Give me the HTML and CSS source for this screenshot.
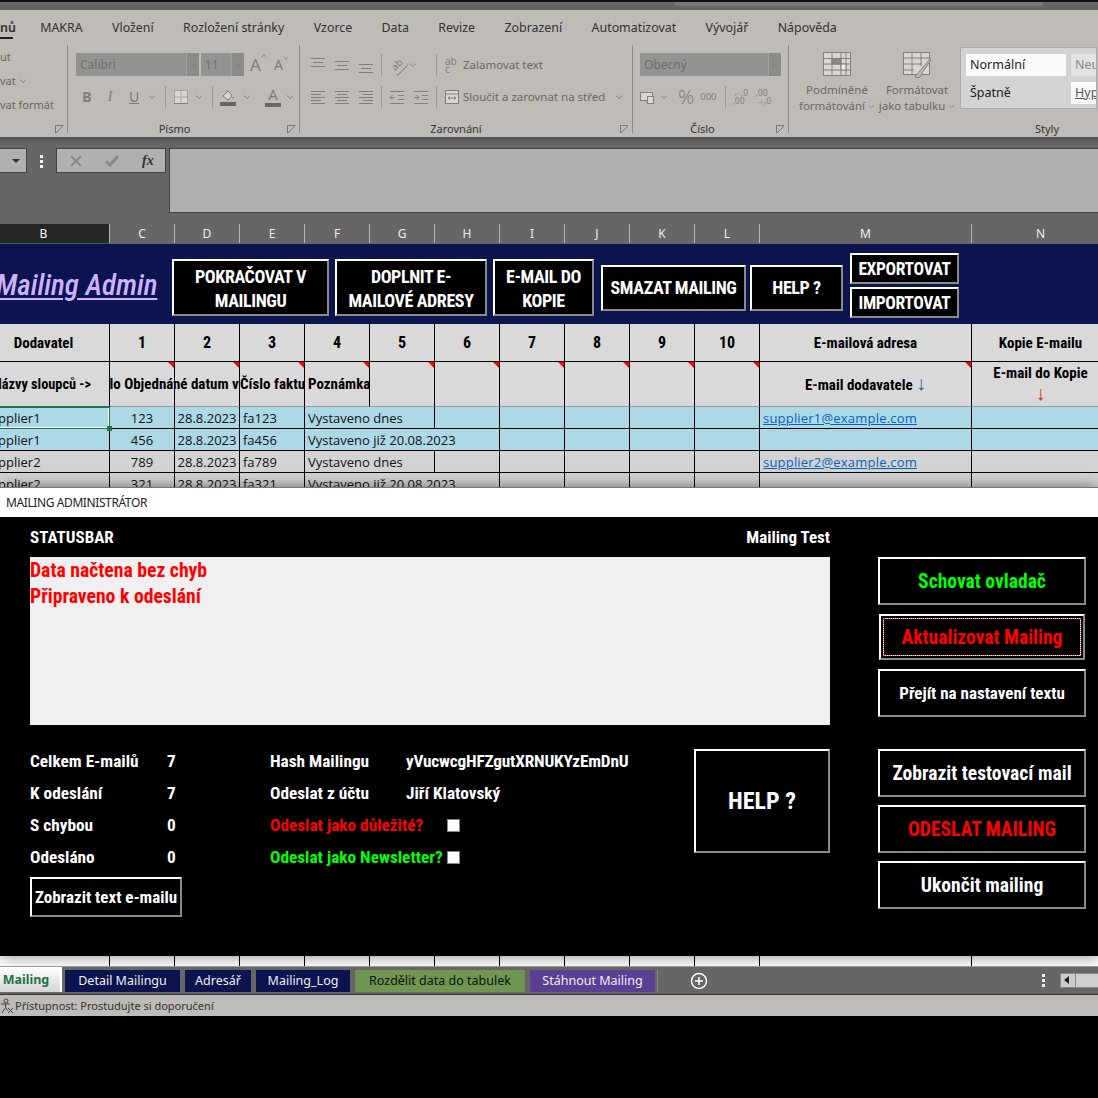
FILE: index.html
```html
<!DOCTYPE html>
<html lang="cs">

<head>
    <meta charset="UTF-8">
    <meta name="viewport" content="width=device-width, initial-scale=1.0">
    <title>Mailing Admin</title>
    <link rel="stylesheet" href="styles.css">
</head>

<body>
    <svg class="sprite" width="0" height="0">
        <symbol id="chev" viewBox="0 0 8 8"><path d="M1 2.5 4 5.5 7 2.5"/></symbol>
        <symbol id="al-top" viewBox="0 0 16 16"><path d="M1 2.5H15M3 6.5H13M1 10.5H15" transform="translate(0 -1)"/></symbol>
        <symbol id="al-mid" viewBox="0 0 16 16"><path d="M1 4.5H15M3 8.5H13M1 12.5H15"/></symbol>
        <symbol id="al-bot" viewBox="0 0 16 16"><path d="M1 7.5H15M3 11.5H13M1 15.5H15"/></symbol>
        <symbol id="al-left" viewBox="0 0 16 16"><path d="M1 2.5H15M1 5.5H11M1 8.5H15M1 11.5H11M1 14.5H15"/></symbol>
        <symbol id="al-center" viewBox="0 0 16 16"><path d="M1 2.5H15M3 5.5H13M1 8.5H15M3 11.5H13M1 14.5H15"/></symbol>
        <symbol id="al-right" viewBox="0 0 16 16"><path d="M1 2.5H15M5 5.5H15M1 8.5H15M5 11.5H15M1 14.5H15"/></symbol>
        <symbol id="ind-less" viewBox="0 0 16 16"><path d="M1 2.5H15M9 6.5H15M9 10.5H15M1 14.5H15M6 8.5H1M3.5 6 1 8.5 3.5 11"/></symbol>
        <symbol id="ind-more" viewBox="0 0 16 16"><path d="M1 2.5H15M9 6.5H15M9 10.5H15M1 14.5H15M1 8.5H6M3.5 6 6 8.5 3.5 11"/></symbol>
    </svg>

    <div class="top-strip"><div class="top-search"></div></div>

    <div class="ribbon">
        <div class="rib-tabs">
            <span class="rib-tab rib-tab-active">nů</span>
            <span class="rib-tab">MAKRA</span>
            <span class="rib-tab">Vložení</span>
            <span class="rib-tab">Rozložení stránky</span>
            <span class="rib-tab">Vzorce</span>
            <span class="rib-tab">Data</span>
            <span class="rib-tab">Revize</span>
            <span class="rib-tab">Zobrazení</span>
            <span class="rib-tab">Automatizovat</span>
            <span class="rib-tab">Vývojář</span>
            <span class="rib-tab">Nápověda</span>
        </div>
        <div class="rib-groups">
            <div class="rib-group group-clip">
                <div class="clip-line">ut</div>
                <div class="clip-line">vat <svg class="ico" width="8" height="8"><use href="#chev"/></svg></div>
                <div class="clip-line">vat formát</div>
                <div class="launcher"></div>
            </div>

            <div class="rib-group group-font">
                <div class="rib-row">
                    <div class="select select-font"><span>Calibri</span><i class="sel-arrow"><svg class="ico" width="8" height="8"><use href="#chev"/></svg></i></div>
                    <div class="select select-size"><span>11</span><i class="sel-arrow"><svg class="ico" width="8" height="8"><use href="#chev"/></svg></i></div>
                    <span class="grow-a">A<svg class="ico" width="6" height="6" viewBox="0 0 8 8"><path d="M1 6 4 2 7 6"/></svg></span>
                    <span class="grow-a grow-small">A<svg class="ico" width="6" height="6" viewBox="0 0 8 8"><path d="M1 2 4 6 7 2"/></svg></span>
                </div>
                <div class="rib-row row-font-fmt">
                    <b class="fmt fmt-b">B</b>
                    <i class="fmt fmt-i">I</i>
                    <u class="fmt fmt-u">U</u>
                    <svg class="ico" width="8" height="8"><use href="#chev"/></svg>
                    <span class="sep"></span>
                    <svg class="ico ico-border" width="16" height="16" viewBox="0 0 16 16"><rect x="1.5" y="1.5" width="13" height="13" fill="#d9d6d3" stroke-dasharray="1 1"/><path d="M8 1.5V14.5M1.5 8H14.5" stroke-dasharray="1 1"/><path d="M1 14.5H15"/></svg>
                    <svg class="ico" width="8" height="8"><use href="#chev"/></svg>
                    <span class="sep"></span>
                    <svg class="ico ico-fill" width="16" height="18" viewBox="0 0 16 18"><path d="M3 8 8 3 12 8 8 12Z" fill="#d9d6d3"/><path d="M6 2 8 4M13 9V11"/><rect x="0" y="14" width="16" height="4" fill="#6a6766" stroke="none"/></svg>
                    <svg class="ico" width="8" height="8"><use href="#chev"/></svg>
                    <span class="font-color">A</span>
                    <svg class="ico" width="8" height="8"><use href="#chev"/></svg>
                </div>
                <div class="rib-label label-font">Písmo</div>
                <div class="launcher"></div>
            </div>

            <div class="rib-group group-align">
                <div class="rib-row">
                    <svg class="ico" width="16" height="16"><use href="#al-top"/></svg>
                    <svg class="ico ml8" width="16" height="16"><use href="#al-mid"/></svg>
                    <svg class="ico ml8" width="16" height="16"><use href="#al-bot"/></svg>
                    <span class="sep sep-a"></span>
                    <span class="orient-ico">ab</span>
                    <svg class="ico ml4" width="8" height="8"><use href="#chev"/></svg>
                    <span class="sep sep-b"></span>
                    <span class="wrap-ico">ab<br>c</span>
                    <span class="rib-text">Zalamovat text</span>
                </div>
                <div class="rib-row">
                    <svg class="ico" width="16" height="16"><use href="#al-left"/></svg>
                    <svg class="ico ml8" width="16" height="16"><use href="#al-center"/></svg>
                    <svg class="ico ml8" width="16" height="16"><use href="#al-right"/></svg>
                    <span class="sep sep-a"></span>
                    <svg class="ico" width="16" height="16"><use href="#ind-less"/></svg>
                    <svg class="ico ml8" width="16" height="16"><use href="#ind-more"/></svg>
                    <span class="sep sep-c"></span>
                    <svg class="ico" width="14" height="16" viewBox="0 0 14 16"><rect x="0.5" y="1.5" width="13" height="13" fill="#d9d6d3"/><path d="M0.5 5H13.5M3 9H11M3 9 5 7.5M3 9 5 10.5M11 9 9 7.5M11 9 9 10.5"/></svg>
                    <span class="rib-text">Sloučit a zarovnat na střed</span>
                    <svg class="ico ml10" width="8" height="8"><use href="#chev"/></svg>
                </div>
                <div class="rib-label label-align">Zarovnání</div>
                <div class="launcher"></div>
            </div>

            <div class="rib-group group-num">
                <div class="rib-row">
                    <div class="select select-num"><span>Obecný</span><i class="sel-arrow"><svg class="ico" width="8" height="8"><use href="#chev"/></svg></i></div>
                </div>
                <div class="rib-row row-num">
                    <svg class="ico" width="15" height="16" viewBox="0 0 15 16"><rect x="0.5" y="3.5" width="12" height="8" fill="#d9d6d3"/><rect x="7.5" y="7.5" width="6" height="7" fill="#d9d6d3"/></svg>
                    <svg class="ico ml5" width="8" height="8"><use href="#chev"/></svg>
                    <span class="percent">%</span>
                    <span class="thousand">000</span>
                    <span class="sep sep-d"></span>
                    <span class="dec-btn">←,0<br>,00</span>
                    <span class="dec-btn">,00<br>→,0</span>
                </div>
                <div class="rib-label label-num">Číslo</div>
                <div class="launcher"></div>
            </div>

            <div class="rib-group group-styles">
                <div class="styles-row">
                    <div class="big-btn">
                        <svg class="ico" width="28" height="24" viewBox="0 0 28 24"><rect x="0.5" y="0.5" width="27" height="23" fill="#d9d6d3"/><path d="M0.5 6.5H27.5M0.5 12H27.5M0.5 18H27.5M9 0.5V23.5M18 0.5V23.5M23 0.5V23.5"/><rect x="9" y="6.5" width="9" height="5.5" fill="#8c8a88"/><rect x="18" y="12" width="5" height="6" fill="#eee"/></svg>
                        <span>Podmíněné<br>formátování <svg class="ico" width="7" height="7"><use href="#chev"/></svg></span>
                    </div>
                    <div class="big-btn">
                        <svg class="ico" width="30" height="28" viewBox="0 0 30 28"><rect x="1.5" y="0.5" width="26" height="22" fill="#d9d6d3"/><path d="M1.5 6H27.5M1.5 12H20M1.5 18H12M10 0.5V22M19 0.5V14"/><path d="M28 7 17 20 13 25C17 27 20 24 20 21L29 8Z" fill="#bdbab7"/></svg>
                        <span>Formátovat<br>jako tabulku <svg class="ico" width="7" height="7"><use href="#chev"/></svg></span>
                    </div>
                    <div class="gallery">
                        <div class="style-cell style-normal">Normální</div>
                        <div class="style-cell style-neutral">Neutrální</div>
                        <div class="style-cell style-bad">Špatně</div>
                        <div class="style-cell style-link">Hypertextový odkaz</div>
                    </div>
                </div>
                <div class="rib-label">Styly</div>
            </div>
        </div>
    </div>

    <div class="formula-bar">
        <div class="name-box"><span class="name-caret"></span></div>
        <div class="fb-dots"><i></i><i></i><i></i></div>
        <div class="fx-box">
            <svg class="fx-cross" width="12" height="12" viewBox="0 0 12 12"><path d="M1 1 11 11M11 1 1 11"/></svg>
            <svg class="fx-check" width="14" height="12" viewBox="0 0 14 12"><path d="M1 6 5 10 13 1"/></svg>
            <span class="fx-label">fx</span>
        </div>
        <div class="formula-input"></div>
    </div>

    <div class="col-heads">
        <span class="col-head col-selected">B</span>
        <span class="col-head">C</span>
        <span class="col-head">D</span>
        <span class="col-head">E</span>
        <span class="col-head">F</span>
        <span class="col-head">G</span>
        <span class="col-head">H</span>
        <span class="col-head">I</span>
        <span class="col-head">J</span>
        <span class="col-head">K</span>
        <span class="col-head">L</span>
        <span class="col-head">M</span>
        <span class="col-head">N</span>
    </div>

    <div class="sheet">
        <div class="banner">
            <span class="banner-title">Mailing Admin</span>
            <a class="btn banner-btn btn-two btn-continue">POKRAČOVAT V<br>MAILINGU</a>
            <a class="btn banner-btn btn-two btn-fill">DOPLNIT E-<br>MAILOVÉ ADRESY</a>
            <a class="btn banner-btn btn-two btn-copy">E-MAIL DO<br>KOPIE</a>
            <a class="btn banner-btn btn-low btn-delete">SMAZAT MAILING</a>
            <a class="btn banner-btn btn-low btn-help">HELP ?</a>
            <div class="banner-stack">
                <a class="btn banner-btn">EXPORTOVAT</a>
                <a class="btn banner-btn">IMPORTOVAT</a>
            </div>
        </div>

        <table class="grid">
            <colgroup>
                <col class="c-name">
                <col class="c-num"><col class="c-num"><col class="c-num"><col class="c-num"><col class="c-num">
                <col class="c-num"><col class="c-num"><col class="c-num"><col class="c-num"><col class="c-num">
                <col class="c-mail">
                <col class="c-copy">
            </colgroup>
            <tr class="row-head">
                <th>Dodavatel</th>
                <th>1</th><th>2</th><th>3</th><th>4</th><th>5</th>
                <th>6</th><th>7</th><th>8</th><th>9</th><th>10</th>
                <th>E-mailová adresa</th>
                <th>Kopie E-mailu</th>
            </tr>
            <tr class="row-names">
                <th class="names-first">Názvy sloupců -&gt;</th>
                <th class="note"><div class="clip clip-center">Číslo Objednávky</div></th>
                <th class="note"><div class="clip clip-center">Plánované datum vystavení</div></th>
                <th class="note"><div class="clip clip-tight">Číslo faktury</div></th>
                <th class="note"><div class="clip">Poznámka</div></th>
                <th class="note"></th><th class="note"></th><th class="note"></th><th class="note"></th><th class="note"></th><th class="note"></th>
                <th class="note">E-mail dodavatele <span class="arrow">↓</span></th>
                <th class="two-line">E-mail do Kopie<br><span class="arrow">↓</span></th>
            </tr>
            <tr class="row-data row-blue">
                <td class="t-left t-name selected">Supplier1</td><td>123</td><td>28.8.2023</td><td class="t-left">fa123</td>
                <td class="t-left" colspan="2">Vystaveno dnes</td>
                <td></td><td></td><td></td><td></td><td></td>
                <td class="t-left"><a class="mail">supplier1@example.com</a></td><td></td>
            </tr>
            <tr class="row-data row-blue">
                <td class="t-left t-name">Supplier1</td><td>456</td><td>28.8.2023</td><td class="t-left">fa456</td>
                <td class="t-left" colspan="3">Vystaveno již 20.08.2023</td>
                <td></td><td></td><td></td><td></td>
                <td></td><td></td>
            </tr>
            <tr class="row-data">
                <td class="t-left t-name">Supplier2</td><td>789</td><td>28.8.2023</td><td class="t-left">fa789</td>
                <td class="t-left" colspan="2">Vystaveno dnes</td>
                <td></td><td></td><td></td><td></td><td></td>
                <td class="t-left"><a class="mail">supplier2@example.com</a></td><td></td>
            </tr>
            <tr class="row-data">
                <td class="t-left t-name">Supplier2</td><td>321</td><td>28.8.2023</td><td class="t-left">fa321</td>
                <td class="t-left" colspan="3">Vystaveno již 20.08.2023</td>
                <td></td><td></td><td></td><td></td>
                <td></td><td></td>
            </tr>
            <tr class="row-rest">
                <td></td><td></td><td></td><td></td><td></td><td></td><td></td>
                <td></td><td></td><td></td><td></td><td></td><td></td>
            </tr>
        </table>

        <div class="dialog">
            <div class="dialog-title">MAILING ADMINISTRÁTOR</div>
            <div class="dialog-body">
                <div class="form-main">
                    <div class="status-head">
                        <span>STATUSBAR</span>
                        <span>Mailing Test</span>
                    </div>
                    <div class="status-box">
                        <p>Data načtena bez chyb</p>
                        <p>Připraveno k odeslání</p>
                    </div>
                    <div class="form-bottom">
                        <div class="stats">
                            <div class="stat"><span>Celkem E-mailů</span><b>7</b></div>
                            <div class="stat"><span>K odeslání</span><b>7</b></div>
                            <div class="stat"><span>S chybou</span><b>0</b></div>
                            <div class="stat"><span>Odesláno</span><b>0</b></div>
                            <a class="btn btn-text">Zobrazit text e-mailu</a>
                        </div>
                        <div class="info">
                            <div class="stat"><span>Hash Mailingu</span><b class="hash">yVucwcgHFZgutXRNUKYzEmDnU</b></div>
                            <div class="stat"><span>Odeslat z účtu</span><b>Jiří Klatovský</b></div>
                            <div class="stat check-row red"><span>Odeslat jako důležité?</span><i class="check"></i></div>
                            <div class="stat check-row green"><span>Odeslat jako Newsletter?</span><i class="check"></i></div>
                        </div>
                        <a class="btn btn-bighelp">HELP ?</a>
                    </div>
                </div>
                <div class="side">
                    <a class="btn side-btn green">Schovat ovladač</a>
                    <a class="btn side-btn red btn-focus">Aktualizovat Mailing</a>
                    <a class="btn side-btn side-small">Přejít na nastavení textu</a>
                    <a class="btn side-btn side-second">Zobrazit testovací mail</a>
                    <a class="btn side-btn red">ODESLAT MAILING</a>
                    <a class="btn side-btn">Ukončit mailing</a>
                </div>
            </div>
        </div>
    </div>

    <div class="sheet-tabs">
        <span class="tab tab-active">Mailing</span>
        <span class="tab tab-navy tab-detail">Detail Mailingu</span>
        <span class="tab tab-navy tab-book">Adresář</span>
        <span class="tab tab-navy tab-log">Mailing_Log</span>
        <span class="tab tab-olive">Rozdělit data do tabulek</span>
        <span class="tab tab-violet">Stáhnout Mailing</span>
        <span class="tabs-sep"></span>
        <svg class="tab-add" width="18" height="18" viewBox="0 0 18 18"><circle cx="9" cy="9" r="7.5"/><path d="M5 9H13M9 5V13"/></svg>
        <div class="fb-dots tab-dots"><i></i><i></i><i></i></div>
        <div class="hscroll"><span class="hscroll-btn"></span></div>
    </div>

    <div class="status-bar">
        <svg class="acc-ico" width="14" height="16" viewBox="0 0 14 16"><circle cx="6" cy="3" r="2"/><path d="M1 6H10M5.5 6V9.5M5.5 9.5 2 15M5.5 9.5 7.5 12.5"/><path class="acc-x" d="M8 10 13 15M13 10 8 15"/></svg>
        <span>Přístupnost: Prostudujte si doporučení</span>
    </div>
</body>

</html>
```
FILE: styles.css
```css
* {
    margin: 0;
    padding: 0;
    box-sizing: border-box;
}

html,
body {
    height: 100%;
    overflow: hidden;
    background: #000;
}

body {
    font-family: "Noto Sans", "Open Sans", sans-serif;
    font-size: 13px;
    color: #222;
}

.sprite {
    position: absolute;
}

/* top strip */
.top-strip {
    height: 10px;
    background: #666;
    border-top: 2px solid #111;
    padding-left: 675px;
}

.top-search {
    width: 368px;
    height: 4px;
    background: #777;
}

/* ribbon */
.ribbon {
    height: 128px;
    background: #bfbbb7;
    border-bottom: 1px solid #555;
}

.rib-tabs {
    display: flex;
    height: 35px;
    align-items: center;
    white-space: nowrap;
}

.rib-tab {
    padding: 0 14.7px;
    font-size: 12.4px;
    color: #333;
    line-height: 17px;
}

.rib-tab-active {
    width: 25.5px;
    padding: 0;
    font-weight: 600;
    position: relative;
}

.rib-tab-active::after {
    content: "";
    position: absolute;
    left: 0;
    width: 13px;
    bottom: -3px;
    height: 2px;
    background: #222;
}

.rib-groups {
    display: flex;
    height: 88px;
    white-space: nowrap;
}

.rib-group {
    position: relative;
    display: flex;
    flex-direction: column;
    gap: 9px;
    padding-top: 8px;
    flex: none;
    border-right: 1px solid #8d8a87;
    color: #6a6765;
    font-size: 11.5px;
}

.group-clip {
    width: 68px;
    gap: 0;
    padding-top: 0;
}

.clip-line {
    height: 24px;
    line-height: 24px;
    font-size: 11px;
}

.group-font {
    width: 232px;
    padding-left: 8px;
}

.group-align {
    width: 333px;
    padding-left: 10px;
}

.group-num {
    width: 156px;
    padding-left: 7px;
}

.group-styles {
    width: 516px;
    border-right: 0;
    padding-top: 2px;
}

.rib-row {
    display: flex;
    align-items: center;
    height: 23px;
}

.rib-label {
    position: absolute;
    left: 0;
    right: 0;
    bottom: -4px;
    text-align: center;
    font-size: 11px;
    line-height: 16px;
    color: #333;
}

.label-font { padding-right: 18px; }
.label-align { padding-right: 20px; }
.label-num { padding-right: 16px; }

.launcher {
    position: absolute;
    right: 4px;
    bottom: 0;
    width: 8px;
    height: 8px;
    border: 1px solid #777;
    border-width: 1px 0 0 1px;
    background: linear-gradient(135deg, transparent 45%, #777 45%, #777 55%, transparent 55%);
}

.ico {
    flex: none;
    fill: none;
    stroke: #817e7c;
    stroke-width: 1;
}

.ml4 { margin-left: 4px; }
.ml5 { margin-left: 5px; }
.ml8 { margin-left: 8px; }
.ml10 { margin-left: 10px; }

.sep {
    flex: none;
    width: 1px;
    height: 22px;
    background: #9a9794;
}

.sep-a { margin: 0 7px 0 7px; }
.sep-b { margin: 0 8px 0 19px; }
.sep-c { margin: 0 8px 0 7px; }
.sep-d { margin: 0 7px 0 8px; }

.select {
    display: flex;
    height: 23px;
    background: #949392;
    color: #6f6e6d;
    font-size: 12px;
    line-height: 23px;
    padding-left: 4px;
}

.select span {
    flex: 1;
}

.sel-arrow {
    display: flex;
    align-items: center;
    justify-content: center;
    width: 13px;
    background: #8c8b8a;
    border-left: 1px solid #a3a2a1;
}

.select-font { width: 123px; }
.select-size { width: 43px; margin-left: 2px; }
.select-num { width: 141px; }

.grow-a {
    display: flex;
    font-size: 17px;
    color: #807d7b;
    margin-left: 6px;
    align-items: flex-start;
    width: 20px;
}

.grow-small {
    font-size: 14px;
    margin-left: 4px;
}

.row-font-fmt .fmt {
    width: 20px;
    font-family: "Liberation Serif", serif;
    font-size: 14px;
    color: #817e7c;
    text-align: center;
}

.row-font-fmt .fmt-b {
    font-family: "Noto Sans", sans-serif;
    margin-left: 1px;
}

.row-font-fmt .fmt-i { margin-left: 3px; }

.row-font-fmt .fmt-u {
    font-family: "Noto Sans", sans-serif;
    margin: 0 4px;
}

.row-font-fmt .sep {
    margin: 0 7px 0 9px;
}

.ico-fill {
    margin-right: 7px;
}

.ico-border {
    margin-right: 6px;
}

.font-color {
    width: 16px;
    margin-left: 14px;
    margin-right: 5px;
    color: #817e7c;
    font-size: 15px;
    line-height: 17px;
    text-align: center;
    border-bottom: 4px solid #6a6766;
}

.orient-ico {
    width: 16px;
    font-size: 10px;
    line-height: 16px;
    text-align: center;
    color: #817e7c;
    transform: rotate(-45deg);
    border-bottom: 1px solid #817e7c;
}

.wrap-ico {
    width: 14px;
    font-size: 10px;
    line-height: 8px;
    color: #817e7c;
}

.rib-text {
    margin-left: 4px;
    font-size: 11.5px;
}

.row-num .percent {
    margin-left: 10px;
    font-size: 20px;
    color: #817e7c;
    font-weight: 300;
}

.row-num .thousand {
    margin-left: 6px;
    font-size: 9.5px;
    color: #817e7c;
}

.dec-btn {
    width: 16px;
    margin-right: 7px;
    font-size: 8.5px;
    line-height: 8px;
    color: #817e7c;
    white-space: nowrap;
}

.styles-row {
    display: flex;
    align-items: flex-start;
}

.big-btn {
    display: flex;
    flex-direction: column;
    align-items: center;
    width: 80px;
    text-align: center;
    font-size: 11.5px;
    line-height: 15.5px;
    color: #6a6765;
}

.big-btn:first-child {
    margin-left: 8px;
    padding-top: 5px;
}

.big-btn:nth-child(2) {
    padding-top: 5px;
}

.big-btn svg:first-child {
    margin-bottom: 6px;
}

.big-btn:nth-child(2) svg:first-child {
    margin-bottom: 2px;
}

.gallery {
    display: grid;
    grid-template-columns: 100px 100px;
    grid-template-rows: 22px 22px;
    gap: 6px 5px;
    width: 137px;
    height: 62px;
    margin-left: 3px;
    padding: 6px 5px;
    background: #d3d3d3;
    border: 1px solid #aaa;
    overflow: hidden;
    font-size: 12.5px;
    line-height: 22px;
    color: #222;
}

.style-cell {
    padding-left: 4px;
}

.style-normal { background: #fafafa; }
.style-neutral { background: #e3e3e3; color: #888; }
.style-link { background: #fafafa; color: #555; text-decoration: underline; }

/* formula bar */
.formula-bar {
    display: flex;
    align-items: flex-start;
    height: 86px;
    padding-top: 10px;
    background: linear-gradient(#555 0, #666 6px);
}

.name-box {
    display: flex;
    align-items: center;
    justify-content: flex-end;
    width: 27px;
    height: 25px;
    padding-right: 6px;
    background: #b0b0b0;
    border: 1px solid #444;
    border-left: 0;
}

.name-caret {
    border: 4px solid transparent;
    border-top: 4px solid #333;
    border-bottom: 0;
}

.fb-dots {
    display: flex;
    flex-direction: column;
    gap: 2px;
    width: 3px;
    margin: 7px 13px 0 13px;
}

.fb-dots i {
    height: 3px;
    background: #f0f0f0;
}

.fx-box {
    display: flex;
    align-items: center;
    width: 110px;
    height: 25px;
    background: #b0b0b0;
    border: 1px solid #444;
    padding-left: 13px;
}

.fx-cross {
    fill: none;
    stroke: #8a8a8a;
    stroke-width: 2;
}

.fx-check {
    margin-left: 23px;
    fill: none;
    stroke: #8a8a8a;
    stroke-width: 3;
}

.fx-label {
    margin-left: 23px;
    font-family: "Liberation Serif", serif;
    font-style: italic;
    font-weight: 700;
    font-size: 14px;
    color: #333;
}

.formula-input {
    flex: 1;
    height: 65px;
    margin-left: 3px;
    background: #b0b0b0;
    border: 1px solid #444;
    border-right: 0;
}

/* column letters */
.col-heads {
    display: grid;
    grid-template-columns: 132px repeat(10, 65px) 212px 138px;
    width: 1120px;
    margin-left: -22px;
    height: 20px;
    background: #666;
    border-bottom: 2px solid #666;
}

.col-head {
    text-align: center;
    color: #eee;
    font-size: 12px;
    line-height: 19px;
    border-right: 1px solid #b5b5b5;
}

.col-selected {
    background: #262626;
    color: #fff;
    position: relative;
}

.col-selected::after {
    content: "";
    position: absolute;
    left: 0;
    right: 0;
    bottom: -2px;
    height: 2px;
    background: #217346;
}

/* sheet */
.sheet {
    position: relative;
    height: 723px;
    overflow: hidden;
    background: #fff;
    border-bottom: 1px solid #9a9a9a;
}

.banner {
    display: flex;
    align-items: center;
    width: 1098px;
    height: 80px;
    padding: 7px 0 0 0;
    background: #0c1450;
}

.banner-title {
    width: 172px;
    flex: none;
    margin-left: -4px;
    margin-right: 4px;
    margin-top: -5px;
    white-space: nowrap;
    font-family: "Roboto Condensed", "Liberation Sans", sans-serif;
    font-style: italic;
    font-size: 29px;
    font-weight: 500;
    color: #cdb2ff;
    text-decoration: underline;
    text-decoration-thickness: 2px;
    text-underline-offset: 3px;
}

.btn {
    display: flex;
    align-items: center;
    justify-content: center;
    flex: none;
    text-align: center;
    background: #000;
    color: #fff;
    border: 2px solid;
    border-color: #fff #8a8a8a #8a8a8a #fff;
    font-family: "Roboto Condensed", "Liberation Sans", sans-serif;
    font-weight: 700;
}

.banner-btn {
    height: 57px;
    font-size: 18px;
    line-height: 24px;
    letter-spacing: -.4px;
    margin-right: 6px;
    white-space: nowrap;
}

.btn-two {
    padding-top: 2px;
}

.btn-continue { width: 157px; }
.btn-fill { width: 152px; }
.btn-copy { width: 101px; margin-right: 7px; }
.btn-delete { width: 145px; margin-right: 4px; }
.btn-help { width: 93px; margin-right: 7px; }

.btn-low {
    height: 46px;
}

.banner-stack {
    display: flex;
    flex-direction: column;
    gap: 3px;
    margin-top: -4px;
}

.banner-stack .btn {
    width: 109px;
    height: 31px;
    margin: 0;
    font-size: 17.5px;
}

.grid {
    width: 1120px;
    margin-left: -22px;
    table-layout: fixed;
    border-collapse: separate;
    border-spacing: 0;
    font-size: 13px;
}

.c-name { width: 132px; }
.c-num { width: 65px; }
.c-mail { width: 212px; }
.c-copy { width: 138px; }

.grid th,
.grid td {
    position: relative;
    border-right: 1px solid #000;
    border-bottom: 1px solid #000;
    white-space: nowrap;
}

.grid th {
    background: #d9d9d9;
    color: #000;
    font-family: "Roboto Condensed", "Liberation Sans", sans-serif;
    font-size: 15px;
    font-weight: 700;
}

.row-head th {
    height: 38px;
    font-size: 16px;
}

.row-head th:first-child,
.row-head th:nth-child(n+12) {
    font-size: 15px;
}

.row-names th {
    height: 44px;
    line-height: 20px;
    border-bottom-color: #9a9a9a;
}

.row-names .names-first {
    padding-right: 3px;
    font-size: 14.3px;
}

.note::after {
    content: "";
    position: absolute;
    top: 0;
    right: 0;
    border-top: 6px solid #f00;
    border-left: 6px solid transparent;
}

.clip {
    overflow: hidden;
    padding-left: 3px;
    text-align: left;
}

.clip-tight {
    padding-left: 0;
}

.clip-center {
    display: flex;
    justify-content: center;
    padding: 0;
}

.arrow {
    font-family: "Liberation Sans", sans-serif;
    font-weight: 400;
    font-size: 20px;
    line-height: 18px;
    color: #2a5ea8;
}

.row-names .two-line {
    line-height: 21px;
    vertical-align: top;
    padding-top: 1px;
}

.two-line .arrow {
    color: #b5400f;
}

.row-data td {
    height: 22px;
    background: #d3d3d3;
    text-align: center;
    font-family: "Open Sans", sans-serif;
    font-size: 13px;
    line-height: 20px;
    color: #111;
}

.row-blue td {
    background: #add8e6;
}

.row-data .t-left {
    text-align: left;
    padding-left: 3px;
}

.row-data .t-name {
    padding-left: 5px;
}

.selected {
    box-shadow: inset 0 0 0 1px #fff;
    outline: 2px solid #217346;
    outline-offset: -1px;
}

.selected::after {
    content: "";
    position: absolute;
    right: -3px;
    bottom: -3px;
    width: 5px;
    height: 5px;
    background: #217346;
    z-index: 1;
}

.mail {
    color: #0563c1;
    text-decoration: underline;
    letter-spacing: .2px;
}

.row-rest td {
    height: 474px;
    background: #fff;
    border-bottom: 0;
}

/* dialog over the sheet */
.dialog {
    position: absolute;
    left: 0;
    top: 243px;
    width: 1098px;
    height: 469px;
    background: #000;
    border-top: 1px solid #777;
    box-shadow: 0 0 14px rgba(0, 0, 0, .5);
}

.dialog-title {
    height: 29px;
    padding-left: 6px;
    background: #fff;
    color: #222;
    font-size: 12px;
    line-height: 29px;
    letter-spacing: -.4px;
}

.dialog-body {
    display: flex;
    padding-left: 30px;
    font-family: "Roboto Condensed", "Liberation Sans", sans-serif;
    font-weight: 700;
    color: #fff;
}

.form-main {
    width: 800px;
    flex: none;
}

.status-head {
    display: flex;
    justify-content: space-between;
    height: 40px;
    align-items: center;
    font-size: 17px;
}

.status-box {
    height: 168px;
    padding-top: 1px;
    background: #f0f0f0;
    color: #f00;
    font-size: 19.7px;
    line-height: 26px;
}

.form-bottom {
    display: flex;
    margin-top: 20px;
}

.stats {
    width: 240px;
    flex: none;
}

.stat {
    display: flex;
    height: 32px;
    align-items: center;
    font-size: 17.3px;
    white-space: nowrap;
}

.stat span {
    flex: none;
}

.stats .stat span {
    width: 137px;
}

.info {
    width: 424px;
    flex: none;
}

.info .stat span {
    width: 136px;
}

.stat b {
    font-weight: 700;
}

.stat .hash {
    letter-spacing: -.2px;
}

.info .check-row span {
    width: 177px;
}

.red { color: #f00; }
.green { color: #0f0; }

.check {
    width: 13px;
    height: 13px;
    background: #fff;
    border: 1px solid #888;
}

.btn-text {
    width: 152px;
    height: 40px;
    margin-top: 4px;
    font-size: 17px;
    white-space: nowrap;
}

.btn-bighelp {
    width: 136px;
    height: 104px;
    margin-top: 4px;
    font-size: 24px;
}

.side {
    display: flex;
    flex-direction: column;
    gap: 8px;
    width: 208px;
    margin-left: 48px;
    padding-top: 40px;
}

.side-btn {
    height: 48px;
    font-size: 19.6px;
    white-space: nowrap;
}

.side-small {
    font-size: 17px;
}

.side-second {
    margin-top: 24px;
}

.btn-focus {
    width: 206px;
    height: 46px;
    margin: 1px 0 1px 1px;
    box-shadow: inset 0 0 0 2px #000, inset 0 0 0 3px #fff;
    outline: 1px dotted #f44;
    outline-offset: -5px;
}

/* sheet tabs */
.sheet-tabs {
    display: flex;
    align-items: center;
    height: 28px;
    background: #666;
    border-bottom: 1px solid #333;
    padding-left: 0;
    white-space: nowrap;
}

.tab {
    display: flex;
    align-items: center;
    justify-content: center;
    height: 22px;
    margin-right: 5px;
    margin-top: 3px;
    margin-bottom: 3px;
    color: #eee;
    font-size: 12.5px;
}

.tab-active {
    width: 62px;
    height: 25px;
    margin: -2px 3px 0 0;
    padding-right: 8px;
    background: linear-gradient(#fff, #d5d5d5);
    border-right: 2px solid #fff;
    color: #217346;
    font-weight: 700;
}

.tab-navy { background: #0c1450; }
.tab-detail { width: 115px; }
.tab-book { width: 66px; }
.tab-log { width: 94px; }

.tab-olive {
    width: 170px;
    background: #6f9650;
    color: #111;
}

.tab-violet {
    width: 125px;
    background: #5a3f94;
}

.tabs-sep {
    width: 1px;
    height: 22px;
    margin-left: -3px;
    background: #888;
}

.tab-add {
    margin-left: 32px;
    fill: none;
    stroke: #fff;
    stroke-width: 1.5;
}

.tab-dots {
    margin: 0 0 0 334px;
}

.hscroll {
    display: flex;
    flex: 1;
    height: 15px;
    margin-left: 15px;
    background: #cfcfcf;
    border: 1px solid #888;
    border-right: 0;
}

.hscroll-btn {
    width: 15px;
    background: #ccc;
    border-right: 1px solid #888;
    position: relative;
}

.hscroll-btn::after {
    content: "";
    position: absolute;
    left: 3px;
    top: 2px;
    border: 4px solid transparent;
    border-right: 5px solid #222;
    border-left: 0;
}

/* status bar */
.status-bar {
    display: flex;
    align-items: center;
    gap: 1px;
    height: 21px;
    background: #bfbbb7;
    color: #333;
    font-size: 11px;
}

.acc-ico {
    flex: none;
    fill: none;
    stroke: #444;
}
```
